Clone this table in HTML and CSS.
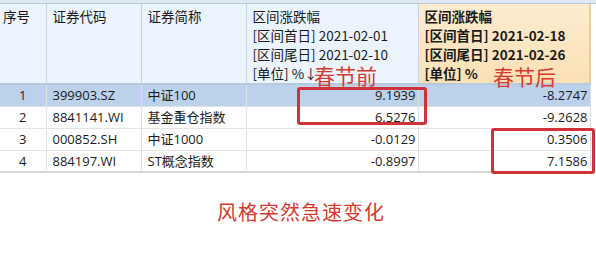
FILE: index.html
```html
<!DOCTYPE html>
<html>
<head>
<meta charset="utf-8">
<link rel="stylesheet" href="styles.css">
</head>
<body>
<div class="page">
  <div class="topstrip"></div>
  <table class="grid">
    <colgroup>
      <col class="c1"><col class="c2"><col class="c3"><col class="c4"><col class="c5">
    </colgroup>
    <thead>
      <tr>
        <th>序号</th>
        <th class="pl">证券代码</th>
        <th class="pl">证券简称</th>
        <th class="pl">
          <div>区间涨跌幅</div>
          <div>[区间首日] 2021-02-01</div>
          <div>[区间尾日] 2021-02-10</div>
          <div>[单位] %↓</div>
        </th>
        <th class="pl hot">
          <div>区间涨跌幅</div>
          <div>[区间首日] 2021-02-18</div>
          <div>[区间尾日] 2021-02-26</div>
          <div>[单位] %</div>
        </th>
      </tr>
    </thead>
    <tbody>
      <tr class="sel"><td class="n">1</td><td class="pl">399903.SZ</td><td class="pl">中证100</td><td class="num">9.1939</td><td class="num">-8.2747</td></tr>
      <tr><td class="n">2</td><td class="pl">8841141.WI</td><td class="pl">基金重仓指数</td><td class="num">6.5276</td><td class="num">-9.2628</td></tr>
      <tr><td class="n">3</td><td class="pl">000852.SH</td><td class="pl">中证1000</td><td class="num">-0.0129</td><td class="num">0.3506</td></tr>
      <tr><td class="n">4</td><td class="pl">884197.WI</td><td class="pl">ST概念指数</td><td class="num">-0.8997</td><td class="num">7.1586</td></tr>
    </tbody>
  </table>
  <div class="note">风格突然急速变化</div>

  <div class="label before">春节前</div>
  <div class="label after">春节后</div>
  <div class="box box1"></div>
  <div class="box box2"></div>
</div>
</body>
</html>
```

FILE: styles.css
```css
html, body {
  margin: 0;
  padding: 0;
  background: #ffffff;
}
.page {
  position: relative;
  width: 596px;
  height: 261px;
  font-family: "Open Sans", "Noto Sans CJK SC", sans-serif;
  font-size: 13px;
  color: #1a1a1a;
}
.topstrip {
  height: 3px;
  background: #dde8f2;
  border-bottom: 1px solid #b9c9d9;
}
.grid {
  border-collapse: collapse;
  table-layout: fixed;
  width: 590px;
}
.c1 { width: 46px; }
.c2 { width: 95px; }
.c3 { width: 105px; }
.c4 { width: 172px; }
.c5 { width: 172px; }

thead th {
  background: #ebf4fd;
  font-weight: normal;
  text-align: left;
  vertical-align: top;
  height: 72px;
  padding: 3px 3px 0 3px;
  border-right: 1px solid #c6d3e0;
  border-bottom: 2px solid #b7c9dc;
  line-height: 19px;
  font-size: 13.5px;
  font-family: "Noto Sans CJK SC", "Open Sans", sans-serif;
}
thead th.pl { padding-left: 6px; }
thead th.hot {
  background: linear-gradient(#fdecd0, #fbe0b4);
  font-weight: bold;
  border-right: 2px solid #e9cf9f;
}
thead th div { white-space: nowrap; }

tbody td {
  height: 22px;
  padding: 0 3px;
  border-right: 1px solid #e0e0e0;
  border-bottom: 1px solid #e3e3e3;
  white-space: nowrap;
  box-sizing: border-box;
  line-height: 20px;
}
tbody td.pl { padding-left: 6px; }
tbody td.n { text-align: center; }
tbody td.num { text-align: right; padding-right: 2px; }
tbody tr.sel td { background: #bcd2ea; }
tbody tr:last-child td { border-bottom: 2px solid #d4d4d4; }

.note {
  margin: 25px 0 0 217px;
  color: #d03a33;
  font-family: "Noto Sans CJK SC", sans-serif;
  font-size: 20px;
  line-height: 28px;
  letter-spacing: 1px;
}

.label {
  position: absolute;
  color: #d43c33;
  font-family: "Noto Sans CJK SC", sans-serif;
  font-size: 21px;
  line-height: 24px;
}
.before { left: 314px; top: 63px; }
.after { left: 493px; top: 64px; }

.box {
  position: absolute;
  border: 3px solid #d0323a;
  border-radius: 3px;
  box-sizing: border-box;
}
.box1 { left: 297px; top: 87px; width: 130px; height: 38px; }
.box2 { left: 491px; top: 128px; width: 104px; height: 46px; }
```
